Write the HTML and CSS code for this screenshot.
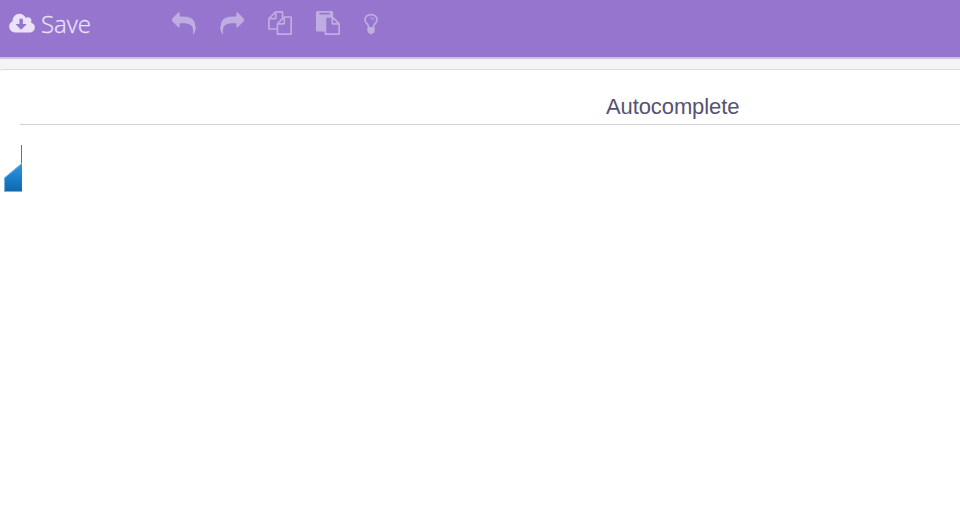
FILE: index.html
```html
<!DOCTYPE html>
<html lang="en">
<head>
<meta charset="utf-8">
<title>Autocomplete</title>
<link rel="stylesheet" href="styles.css">
</head>
<body>
<header class="toolbar">
  <div class="save">
    <svg class="cloud" viewBox="0 0 1920 1792"><path d="M1280 928q0-14-9-23t-23-9h-224v-352q0-13-9.500-22.500t-22.500-9.500h-192q-13 0-22.500 9.500t-9.500 22.500v352h-224q-13 0-22.500 9.500t-9.500 22.500q0 14 9 23l352 352q9 9 23 9t23-9l351-351q10-12 10-24zm640 224q0 159-112.500 271.500t-271.500 112.500h-1088q-185 0-316.500-131.500t-131.500-316.500q0-130 70-240t188-165q-2-30-2-43 0-212 150-362t362-150q156 0 285.500 87t188.500 231q71-62 166-62 106 0 181 75t75 181q0 76-41 138 130 31 213.500 135.500t83.500 238.500z"/></svg>
    <span>Save</span>
  </div>
  <nav class="tools">
    <svg class="low" viewBox="0 0 1792 1792"><path d="M1792 1120q0 166-127 451-3 7-10.500 24t-13.500 30-13 22q-12 17-28 17-15 0-23.500-10t-8.500-25q0-9 2.500-26.500t2.500-23.500q5-68 5-123 0-112-19.500-200.500t-54-153.500-89-112-116.500-77.500-146-43.500-166.500-20-188.500-5.500h-224v256q0 26-19 45t-45 19-45-19l-512-512q-19-19-19-45t19-45l512-512q19-19 45-19t45 19 19 45v256h224q713 0 875 403 53 134 53 333z"/></svg>
    <svg class="low" viewBox="0 0 1792 1792"><path transform="translate(1792 0) scale(-1 1)" d="M1792 1120q0 166-127 451-3 7-10.500 24t-13.500 30-13 22q-12 17-28 17-15 0-23.500-10t-8.500-25q0-9 2.500-26.500t2.500-23.500q5-68 5-123 0-112-19.500-200.500t-54-153.500-89-112-116.500-77.500-146-43.500-166.500-20-188.500-5.500h-224v256q0 26-19 45t-45 19-45-19l-512-512q-19-19-19-45t19-45l512-512q19-19 45-19t45 19 19 45v256h224q713 0 875 403 53 134 53 333z"/></svg>
    <svg viewBox="0 0 1792 1792"><path d="M1696 384q40 0 68 28t28 68v1216q0 40-28 68t-68 28h-960q-40 0-68-28t-28-68v-288h-544q-40 0-68-28t-28-68v-672q0-40 20-88t48-76l408-408q28-28 76-48t88-20h416q40 0 68 28t28 68v328q68-40 128-40h416zm-544 213l-299 299h299v-299zm-640-384l-299 299h299v-299zm196 647l316-316v-416h-384v416q0 40-28 68t-68 28h-416v640h512v-256q0-40 20-88t48-76zm956 804v-1152h-384v416q0 40-28 68t-68 28h-416v640h896z"/></svg>
    <svg viewBox="0 0 1792 1792"><path d="M768 1664h896v-640h-416q-40 0-68-28t-28-68v-416h-384v1152zm256-1440v-64q0-13-9.500-22.500t-22.500-9.500h-704q-13 0-22.500 9.500t-9.500 22.500v64q0 13 9.500 22.500t22.500 9.500h704q13 0 22.500-9.500t9.500-22.500zm256 672h299l-299-299v299zm512 128v672q0 40-28 68t-68 28h-960q-40 0-68-28t-28-68v-160h-544q-40 0-68-28t-28-68v-1344q0-40 28-68t68-28h1088q40 0 68 28t28 68v328q21 13 36 28l408 408q28 28 48 76t20 88z"/></svg>
    <svg class="bulb low" viewBox="384 0 1024 1792"><path d="M1120 576q0 13-9.500 22.500t-22.500 9.500-22.500-9.500-9.500-22.500q0-46-54-71t-106-25q-13 0-22.500-9.500t-9.500-22.500 9.500-22.500 22.500-9.500q50 0 99.500 16t87 54 37.500 90zm160 0q0-72-34.500-134t-90-101.500-123-62-136.500-22.500-136.500 22.500-123 62-90 101.500-34.500 134q0 101 68 180 10 11 30.500 33t30.500 33q128 153 141 298h228q13-145 141-298 10-11 30.500-33t30.500-33q68-79 68-180zm128 0q0 155-103 268-45 49-74.500 87t-59.500 95.500-34 107.500q47 28 47 82 0 37-25 64 25 27 25 64 0 52-45 81 13 23 13 47 0 46-31.500 71t-77.500 25q-20 44-60 70t-87 26-87-26-60-70q-46 0-77.500-25t-31.500-71q0-24 13-47-45-29-45-81 0-37 25-64-25-27-25-64 0-54 47-82-4-50-34-107.500t-59.500-95.500-74.500-87q-103-113-103-268 0-99 44.500-184.500t117-142 164-89 186.500-32.500 186.500 32.500 164 89 117 142 44.500 184.500z"/></svg>
  </nav>
</header>
<main class="panel">
  <h1 class="title">Autocomplete</h1>
  <svg class="marker" viewBox="0 0 18 47">
    <defs><linearGradient id="blue" x1="0" y1="0" x2="0" y2="1"><stop offset="0" stop-color="#3595df"/><stop offset=".5" stop-color="#1b80cd"/><stop offset="1" stop-color="#1265a8"/></linearGradient></defs>
    <path d="M0 33L18 18V47H0z" fill="url(#blue)"/>
    <path d="M.5 47V33L18 18.500M0 46.500H18" fill="none" stroke="#77b2e2"/>
    <path d="M17 0h1v18h-1z" fill="#6b6896"/>
  </svg>
</main>
</body>
</html>
```
FILE: styles.css
```css
* { box-sizing: border-box; }
body {
  margin: 0;
  height: 505px;
  overflow: hidden;
  background: #f4f4f4;
  font-family: "Liberation Sans", Arial, sans-serif;
}
svg { display: block; }
.toolbar {
  display: flex;
  height: 59px;
  padding: 11px 0 0 9px;
  background: #9575cd;
  border-bottom: 2px solid #ccc8d1;
}
.save {
  display: flex;
  gap: 6px;
  width: 163px;
  color: #eae3f5;
  font: 300 24px/25px "Open Sans", sans-serif;
  -webkit-text-stroke: 0.3px #eae3f5;
}
.cloud {
  width: 26px;
  height: 24px;
  margin-top: 1px;
  fill: #eae3f5;
}
.tools {
  display: flex;
  gap: 24px;
  fill: #bface1;
}
.tools svg { width: 24px; height: 24px; }
.tools .low { margin-top: 1px; }
.tools .bulb { width: 14px; }
.panel {
  height: 440px;
  margin-top: 10px;
  padding: 19px 0 0;
  background: #fff;
  border-top: 1px solid #dcdcdc;
  border-top-left-radius: 3px;
}
.title {
  height: 36px;
  margin: 0 0 20px 20px;
  padding-left: 586px;
  border-bottom: 1px solid #d0d0d0;
  color: #555273;
  font-size: 22px;
  font-weight: 400;
  letter-spacing: -0.1px;
  line-height: 36px;
}
.marker {
  width: 18px;
  height: 47px;
  margin-left: 4px;
}
```
